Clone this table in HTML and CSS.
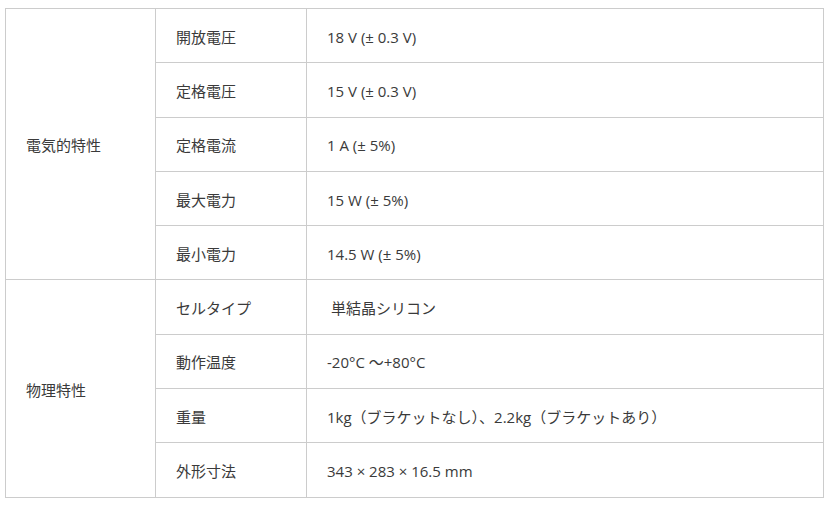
FILE: index.html
```html
<!DOCTYPE html>
<html lang="ja">
<head>
<meta charset="utf-8">
<link rel="stylesheet" href="styles.css">
</head>
<body>
<table class="spec">
  <tr>
    <td class="group" rowspan="5">電気的特性</td>
    <td class="label">開放電圧</td>
    <td class="value">18 V (± 0.3 V)</td>
  </tr>
  <tr><td class="label">定格電圧</td><td class="value">15 V (± 0.3 V)</td></tr>
  <tr><td class="label">定格電流</td><td class="value">1 A (± 5%)</td></tr>
  <tr><td class="label">最大電力</td><td class="value">15 W (± 5%)</td></tr>
  <tr><td class="label">最小電力</td><td class="value">14.5 W (± 5%)</td></tr>
  <tr>
    <td class="group" rowspan="4">物理特性</td>
    <td class="label">セルタイプ</td>
    <td class="value">&nbsp;単結晶シリコン</td>
  </tr>
  <tr><td class="label">動作温度</td><td class="value">-20°C ～+80°C</td></tr>
  <tr><td class="label">重量</td><td class="value">1kg（ブラケットなし）、2.2kg（ブラケットあり）</td></tr>
  <tr><td class="label">外形寸法</td><td class="value">343 × 283 × 16.5 mm</td></tr>
</table>
</body>
</html>
```
FILE: styles.css
```css
html, body {
  background: #ffffff;
}
body {
  margin: 8px 9px 0 5px;
  font-family: "Open Sans", "Noto Sans CJK JP", sans-serif;
  font-size: 15px;
  color: #3a3a3a;
}
.spec {
  border-collapse: collapse;
  width: 819px;
  table-layout: fixed;
}
.spec td {
  border: 1px solid #cccccc;
  padding: 2px 0 0 20px;
  height: 51.3px;
  vertical-align: middle;
  line-height: 20px;
}
.spec .group {
  width: 129px;
}
.spec .label {
  width: 130px;
}
```
